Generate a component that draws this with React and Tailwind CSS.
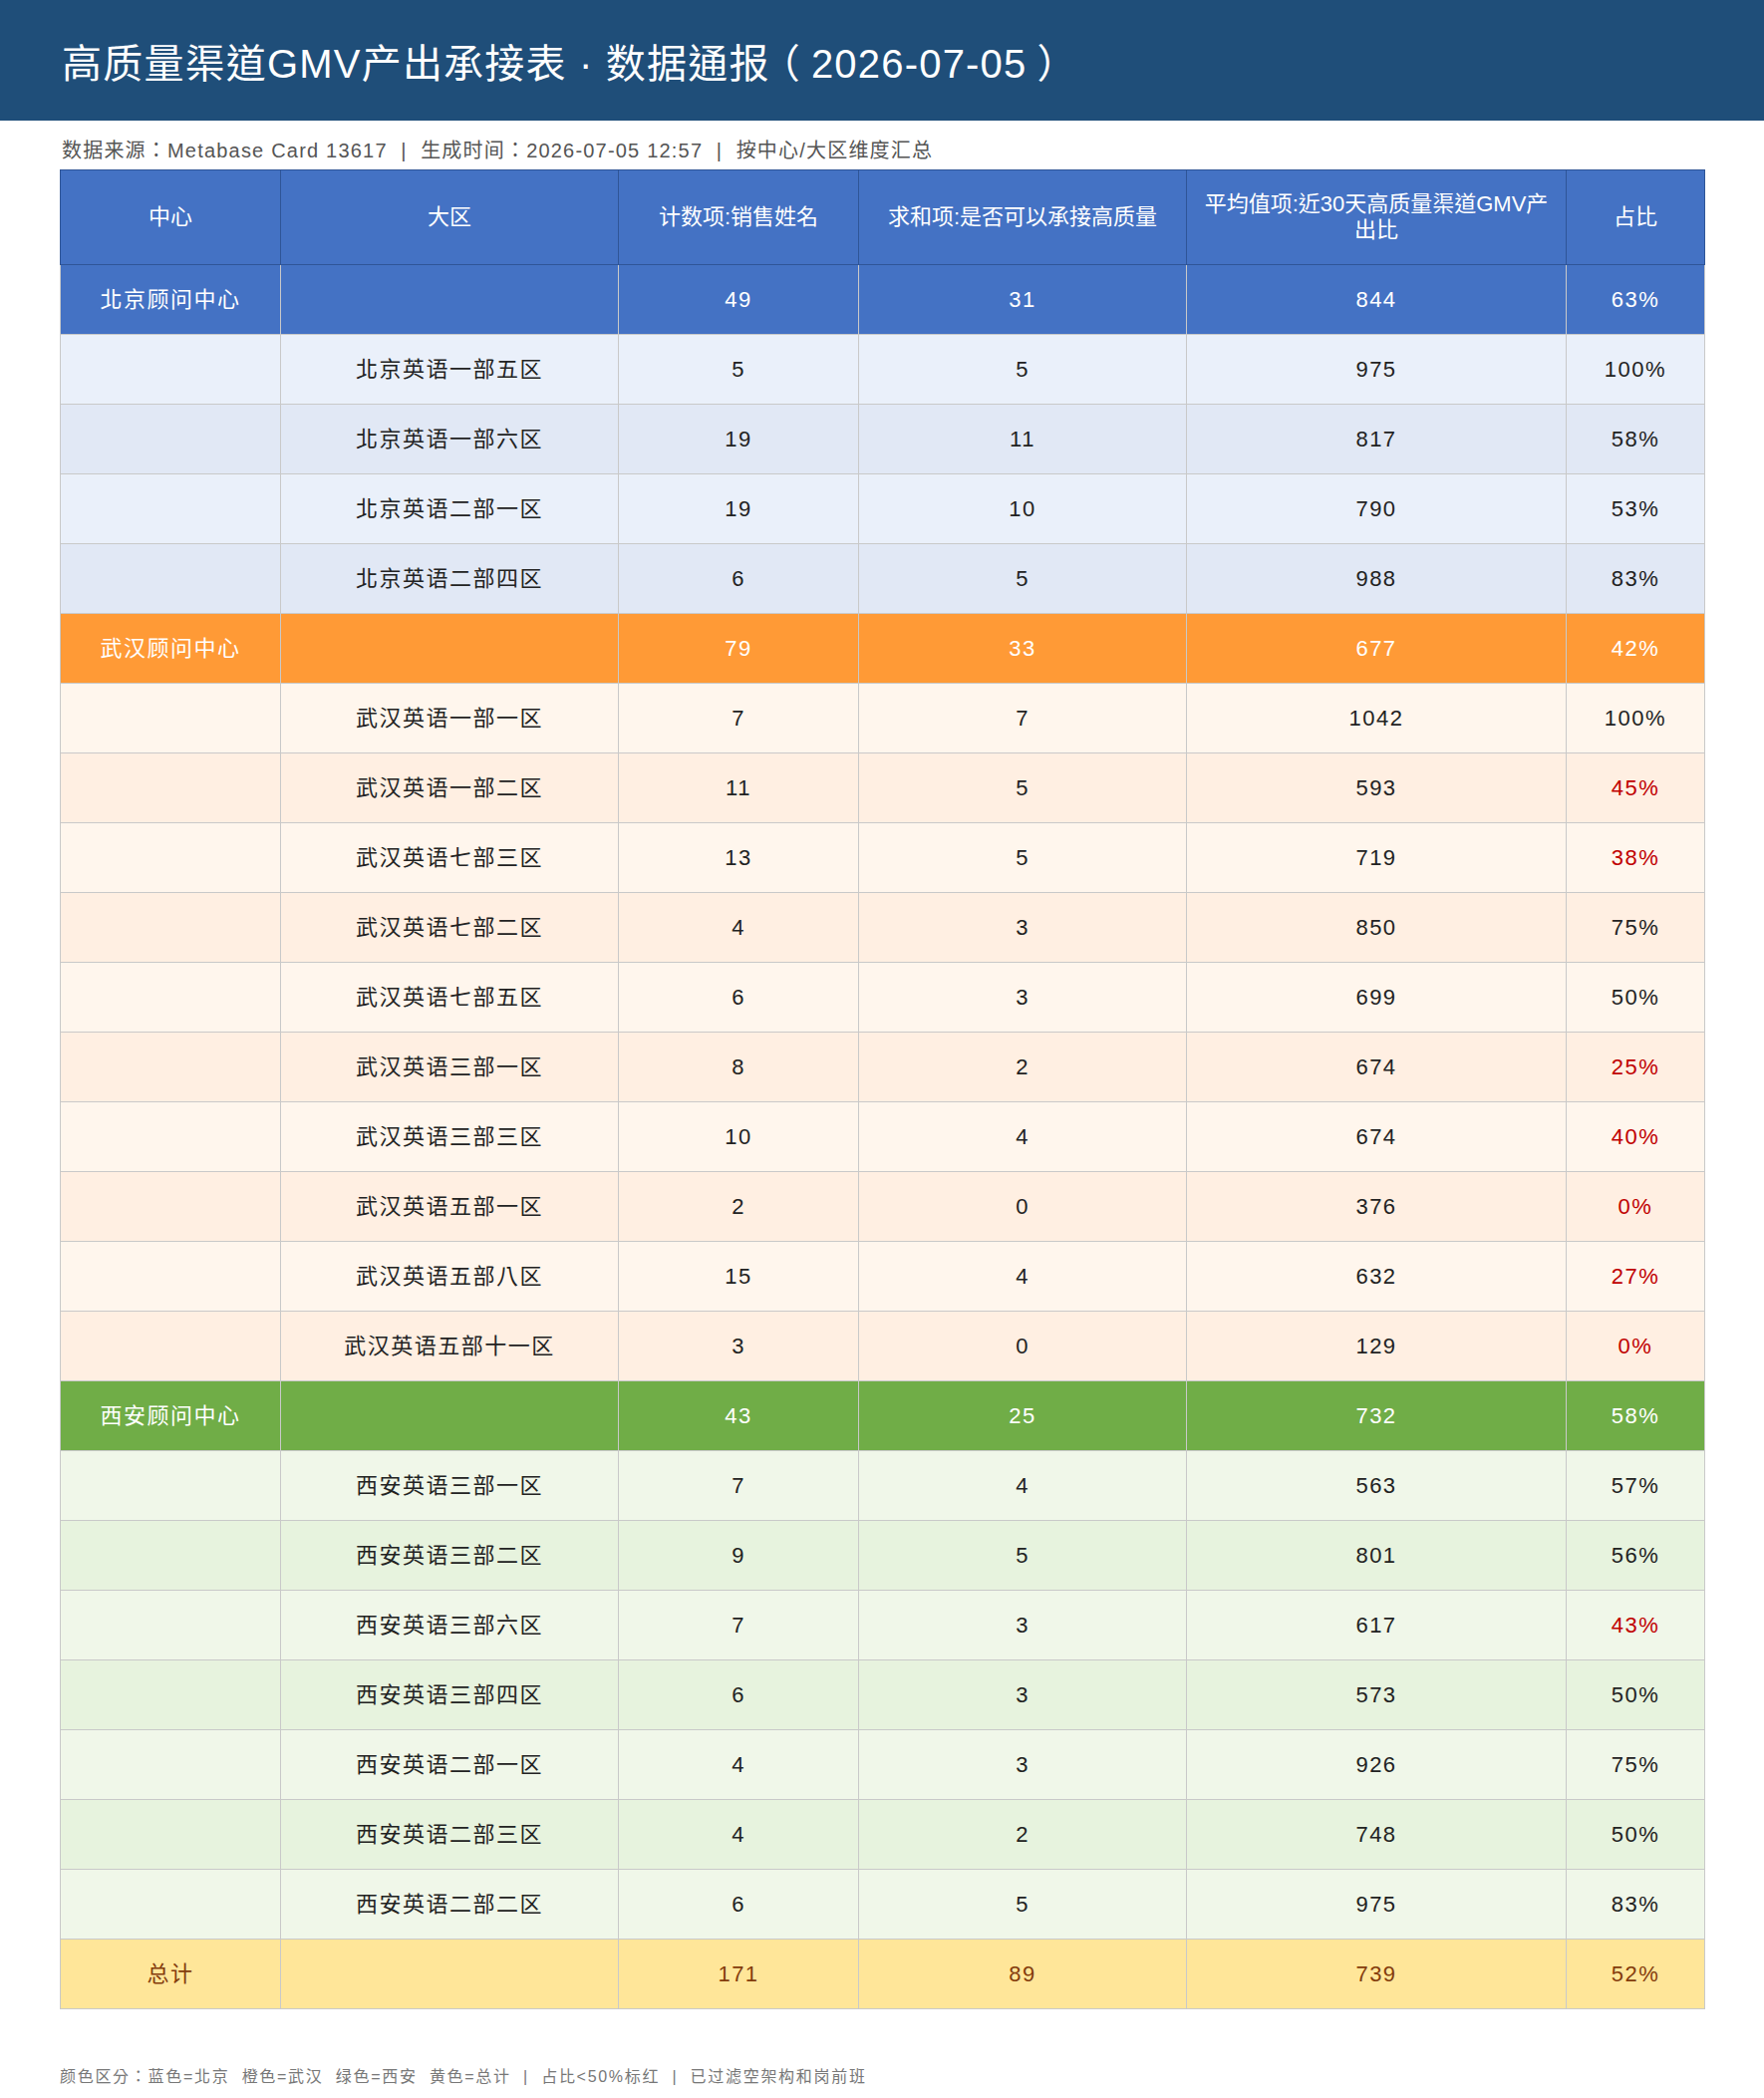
import React from 'react';

// --------------------------------------------------------
// Data
// --------------------------------------------------------

const GROUPS = [
  {
    name: '北京顾问中心',
    total: [49, 31, 844, '63%'],
    head: 'bg-[#4472c4]',
    rows: ['bg-[#eaf0fa]', 'bg-[#e1e8f5]'],
    items: [
      ['北京英语一部五区', 5, 5, 975, '100%'],
      ['北京英语一部六区', 19, 11, 817, '58%'],
      ['北京英语二部一区', 19, 10, 790, '53%'],
      ['北京英语二部四区', 6, 5, 988, '83%'],
    ],
  },
  {
    name: '武汉顾问中心',
    total: [79, 33, 677, '42%'],
    head: 'bg-[#ff9a36]',
    rows: ['bg-[#fff6ed]', 'bg-[#ffefe2]'],
    items: [
      ['武汉英语一部一区', 7, 7, 1042, '100%'],
      ['武汉英语一部二区', 11, 5, 593, '45%'],
      ['武汉英语七部三区', 13, 5, 719, '38%'],
      ['武汉英语七部二区', 4, 3, 850, '75%'],
      ['武汉英语七部五区', 6, 3, 699, '50%'],
      ['武汉英语三部一区', 8, 2, 674, '25%'],
      ['武汉英语三部三区', 10, 4, 674, '40%'],
      ['武汉英语五部一区', 2, 0, 376, '0%'],
      ['武汉英语五部八区', 15, 4, 632, '27%'],
      ['武汉英语五部十一区', 3, 0, 129, '0%'],
    ],
  },
  {
    name: '西安顾问中心',
    total: [43, 25, 732, '58%'],
    head: 'bg-[#70ad47]',
    rows: ['bg-[#f0f7e9]', 'bg-[#e7f3de]'],
    items: [
      ['西安英语三部一区', 7, 4, 563, '57%'],
      ['西安英语三部二区', 9, 5, 801, '56%'],
      ['西安英语三部六区', 7, 3, 617, '43%'],
      ['西安英语三部四区', 6, 3, 573, '50%'],
      ['西安英语二部一区', 4, 3, 926, '75%'],
      ['西安英语二部三区', 4, 2, 748, '50%'],
      ['西安英语二部二区', 6, 5, 975, '83%'],
    ],
  },
];

const COLUMNS = [
  { label: '中心', width: 'w-[221px]' },
  { label: '大区', width: 'w-[339px]' },
  { label: '计数项:销售姓名', width: 'w-[241px]' },
  { label: '求和项:是否可以承接高质量', width: 'w-[329px]' },
  { label: '平均值项:近30天高质量渠道GMV产出比', width: 'w-[381px]' },
  { label: '占比', width: 'w-[139px]' },
];

const isLow = (pct) => parseInt(pct, 10) < 50;

const cell = 'h-[70px] border border-[#c9c9c9] px-3 text-center align-middle';

// --------------------------------------------------------
// Page
// --------------------------------------------------------

const App = () => (
  <div className="min-h-[2105px] bg-white font-['Liberation_Sans','Noto_Sans_CJK_TC',sans-serif] text-[#222]">
    {/* Title bar */}
    <div className="flex h-[121px] items-center bg-[#1f4e79] px-[62px] pt-[6px]">
      <h1 className="text-[40px] font-normal tracking-[1.2px] text-white">
        高质量渠道GMV产出承接表 · 数据通报
        <span className="px-[10px] [font-feature-settings:'halt']">（</span>
        2026-07-05
        <span className="px-[10px] [font-feature-settings:'halt']">）</span>
      </h1>
    </div>

    <div className="px-[60px]">
      <p className="mt-[15px] h-[34px] pl-[2px] text-[20px] leading-[30px] tracking-[1.2px] text-[#555]">
        数据来源：Metabase Card 13617 &nbsp;| &nbsp;生成时间：2026-07-05 12:57 &nbsp;| &nbsp;按中心/大区维度汇总
      </p>

      <table className="w-[1650px] table-fixed border-collapse">
        <colgroup>
          {COLUMNS.map((c) => (
            <col key={c.label} className={c.width} />
          ))}
        </colgroup>
        <thead>
          <tr className="h-[95px] bg-[#4472c4] text-white">
            {COLUMNS.map((c) => (
              <th
                key={c.label}
                className="border border-[#2f5597] px-3 text-center align-middle text-[22px] font-normal leading-[26px]"
              >
                {c.label}
              </th>
            ))}
          </tr>
        </thead>
        <tbody className="text-[22px] tracking-[1.5px]">
          {GROUPS.map((g) => (
            <React.Fragment key={g.name}>
              <tr className={`${g.head} text-white`}>
                <td className={cell}>{g.name}</td>
                <td className={cell} />
                {g.total.map((v, i) => (
                  <td key={i} className={cell}>
                    {v}
                  </td>
                ))}
              </tr>
              {g.items.map((row, idx) => (
                <tr key={row[0]} className={g.rows[idx % 2]}>
                  <td className={cell} />
                  {row.map((v, i) => (
                    <td
                      key={i}
                      className={`${cell} ${i === 4 && isLow(v) ? 'text-[#c00000]' : ''}`}
                    >
                      {v}
                    </td>
                  ))}
                </tr>
              ))}
            </React.Fragment>
          ))}
          <tr className="bg-[#ffe699] text-[#843c0c]">
            <td className={cell}>总计</td>
            <td className={cell} />
            <td className={cell}>171</td>
            <td className={cell}>89</td>
            <td className={cell}>739</td>
            <td className={cell}>52%</td>
          </tr>
        </tbody>
      </table>

      <p className="mt-[56px] text-[16px] tracking-[1.7px] text-[#777]">
        颜色区分：蓝色=北京 &nbsp;橙色=武汉 &nbsp;绿色=西安 &nbsp;黄色=总计 &nbsp;| &nbsp;占比&lt;50%标红 &nbsp;| &nbsp;已过滤空架构和岗前班
      </p>
    </div>
  </div>
);

export default App;
